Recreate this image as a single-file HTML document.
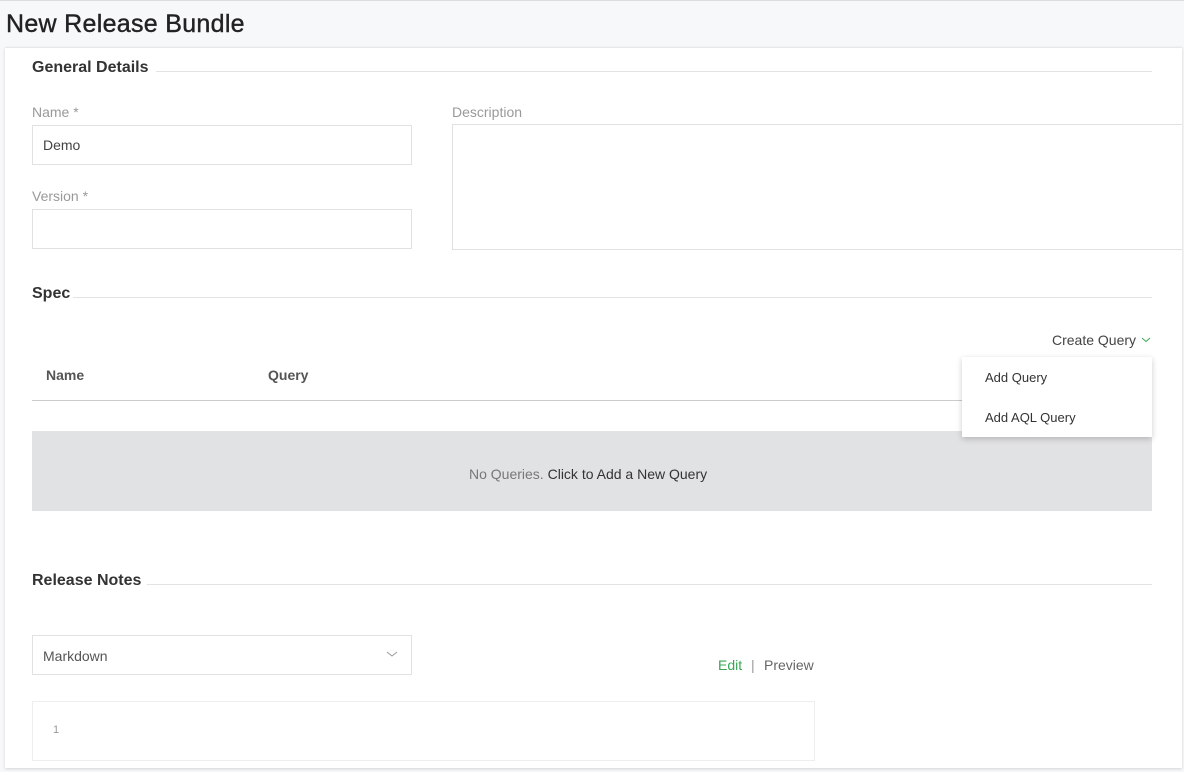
<!DOCTYPE html>
<html><head><style>
*{box-sizing:border-box;margin:0;padding:0}
body{width:1184px;height:772px;background:#f7f8fa;font-family:"Liberation Sans",sans-serif;position:relative;overflow:hidden;color:#333}
.a{position:absolute}
h1{position:absolute;left:6px;top:10px;font-size:25px;font-weight:normal;color:#222;letter-spacing:0.3px;-webkit-text-stroke:0.4px #222}
.panel{position:absolute;left:5px;top:47px;width:1177px;height:721px;background:#fff;box-shadow:0 1px 3px rgba(0,0,0,.15);overflow:hidden;border-top:1px solid #e8e8e8}
.sec{position:absolute;font-size:16px;color:#333;font-weight:bold}
.line{position:absolute;height:1px;background:#e3e3e3}
.lbl{position:absolute;font-size:14px;color:#999}
.box{position:absolute;border:1px solid #e1e1e1;background:#fff}
.t{position:absolute;font-size:14px;color:#444}
</style></head><body>
<div class="a" style="left:0;top:0;width:1184px;height:1px;background:#ddd"></div>
<h1>New Release Bundle</h1>
<div class="panel">
<div class="sec" style="left:27px;top:11px">General Details</div>
<div class="line" style="left:151px;top:23px;width:996px"></div>
<div class="lbl" style="left:27px;top:56px">Name *</div>
<div class="box" style="left:27px;top:77px;width:380px;height:40px"></div>
<div class="t" style="left:38px;top:89px">Demo</div>
<div class="lbl" style="left:27px;top:140px">Version *</div>
<div class="box" style="left:27px;top:161px;width:380px;height:40px"></div>
<div class="lbl" style="left:447px;top:56px">Description</div>
<div class="box" style="left:447px;top:76px;width:760px;height:126px"></div>
<div class="sec" style="left:27px;top:237px">Spec</div>
<div class="line" style="left:68px;top:249px;width:1079px"></div>
<div class="t" style="left:1047px;top:284px">Create Query</div>
<svg class="a" style="left:1136px;top:289px" width="10" height="6"><path d="M1 1l4 3.5 4-3.5" stroke="#3aa655" fill="none" stroke-width="1"/></svg>
<div class="t" style="left:41px;top:319px;color:#555;font-weight:bold;font-size:14px">Name</div>
<div class="t" style="left:263px;top:319px;color:#555;font-weight:bold;font-size:14px">Query</div>
<div class="a" style="left:27px;top:352px;width:1120px;height:1px;background:#ccc"></div>
<div class="a" style="left:27px;top:383px;width:1120px;height:80px;background:#e1e2e4"></div>
<div class="t" style="left:464px;top:418px;color:#777">No Queries. <span style="color:#333">Click to Add a New Query</span></div>
<div class="a" style="left:957px;top:309px;width:190px;height:80px;background:#fff;box-shadow:0 2px 6px rgba(0,0,0,.2)"></div>
<div class="t" style="left:980px;top:322px;color:#333;font-size:13px">Add Query</div>
<div class="t" style="left:980px;top:362px;color:#333;font-size:13px">Add AQL Query</div>
<div class="sec" style="left:27px;top:524px">Release Notes</div>
<div class="line" style="left:142px;top:536px;width:1005px"></div>
<div class="box" style="left:27px;top:587px;width:380px;height:40px"></div>
<div class="t" style="left:38px;top:600px;color:#555">Markdown</div>
<svg class="a" style="left:381px;top:603px" width="12" height="7"><path d="M1 1l5 4 5-4" stroke="#999" fill="none" stroke-width="1"/></svg>
<div class="t" style="left:713px;top:609px;color:#3aa655">Edit</div>
<div class="t" style="left:746px;top:609px;color:#999">|</div>
<div class="t" style="left:759px;top:609px;color:#666">Preview</div>
<div class="box" style="left:27px;top:653px;width:783px;height:60px;border-color:#eee"></div>
<div class="t" style="left:48px;top:676px;font-size:11px;color:#999">1</div>
</div>
</body></html>
